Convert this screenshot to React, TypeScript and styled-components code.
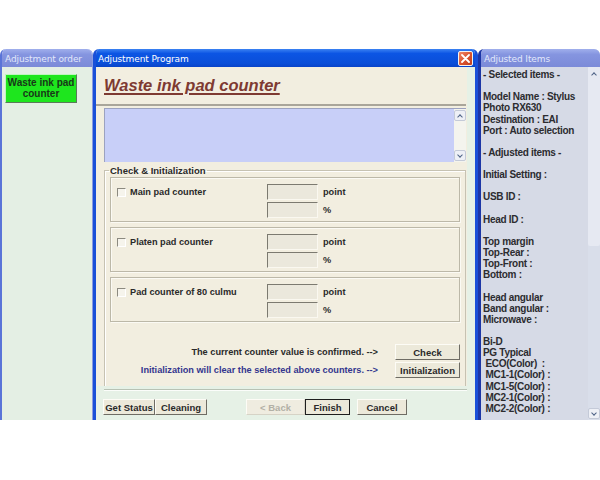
import styled, { createGlobalStyle } from "styled-components";

const GlobalStyle = createGlobalStyle`
  html, body {
    margin: 0;
    padding: 0;
    background: #fff;
  }
  * {
    box-sizing: border-box;
  }
`;

const adjustedLines = [
  "- Selected items -",
  "",
  "Model Name : Stylus",
  "Photo RX630",
  "Destination : EAI",
  "Port : Auto selection",
  "",
  "- Adjusted items -",
  "",
  "Initial Setting :",
  "",
  "USB ID :",
  "",
  "Head ID :",
  "",
  "Top margin",
  "Top-Rear :",
  "Top-Front :",
  "Bottom :",
  "",
  "Head angular",
  "Band angular :",
  "Microwave :",
  "",
  "Bi-D",
  "PG Typical",
  " ECO(Color)  :",
  " MC1-1(Color) :",
  " MC1-5(Color) :",
  " MC2-1(Color) :",
  " MC2-2(Color) :",
];

const counters = ["Main pad counter", "Platen pad counter", "Pad counter of 80 culmu"];

export default function App() {
  return (
    <>
      <GlobalStyle />
      <Desktop>
        <Windows>
          <OrderWindow>
            <TitleBar>Adjustment order</TitleBar>
            <OrderBody>
              <GreenButton>
                Waste ink pad
                <br />
                counter
              </GreenButton>
            </OrderBody>
          </OrderWindow>

          <MainWindow>
            <TitleBar $active>
              Adjustment Program
              <CloseButton>
                <svg width="9" height="9" viewBox="0 0 9 9">
                  <path d="M1 1 L8 8 M8 1 L1 8" stroke="#fff" strokeWidth="1.8" strokeLinecap="round" />
                </svg>
              </CloseButton>
            </TitleBar>
            <MainBody>
              <Sheet>
                <Header>
                  <Heading>Waste ink pad counter</Heading>
                </Header>
                <MessageBox>
                  <ScrollBar $light>
                    <ArrowBox>
                      <Chevron $up />
                    </ArrowBox>
                    <ArrowBox>
                      <Chevron />
                    </ArrowBox>
                  </ScrollBar>
                </MessageBox>
                <GroupBox>
                  <Legend>Check &amp; Initialization</Legend>
                  {counters.map((label) => (
                    <CounterBox key={label}>
                      <CheckLabel>
                        <CheckBox />
                        {label}
                      </CheckLabel>
                      <Fields>
                        <FieldRow>
                          <ValueField />
                          <Unit>point</Unit>
                        </FieldRow>
                        <FieldRow>
                          <ValueField />
                          <Unit>%</Unit>
                        </FieldRow>
                      </Fields>
                    </CounterBox>
                  ))}
                  <ActionRows>
                    <ActionRow>
                      <ActionText>The current counter value is confirmed. --&gt;</ActionText>
                      <WinButton $w={65}>Check</WinButton>
                    </ActionRow>
                    <ActionRow>
                      <ActionText $blue>Initialization will clear the selected above counters. --&gt;</ActionText>
                      <WinButton $w={65}>Initialization</WinButton>
                    </ActionRow>
                  </ActionRows>
                </GroupBox>
              </Sheet>
              <Separator />
              <ButtonBar>
                <WinButton $w={52}>Get Status</WinButton>
                <WinButton $w={52}>Cleaning</WinButton>
                <Spacer />
                <WinButton $w={59} disabled>
                  &lt; Back
                </WinButton>
                <WinButton $w={45} $default>
                  Finish
                </WinButton>
                <Gap />
                <WinButton $w={50}>Cancel</WinButton>
              </ButtonBar>
            </MainBody>
          </MainWindow>

          <ItemsWindow>
            <TitleBar>Adjusted Items</TitleBar>
            <ItemsBody>
              <ItemsList>
                {adjustedLines.map((line, i) => (
                  <ItemLine key={i}>{line || "\u00a0"}</ItemLine>
                ))}
              </ItemsList>
              <ScrollBar>
                <ArrowBox>
                  <Chevron $up />
                </ArrowBox>
                <Thumb />
                <ArrowBox>
                  <Chevron />
                </ArrowBox>
              </ScrollBar>
            </ItemsBody>
          </ItemsWindow>
        </Windows>
      </Desktop>
    </>
  );
}

const Desktop = styled.div`
  width: 600px;
  height: 480px;
  background: #fff;
  padding-top: 49px;
  overflow: hidden;
`;

const Windows = styled.div`
  display: flex;
  height: 371px;
`;

const WindowFrame = styled.section`
  display: flex;
  flex-direction: column;
  border-radius: 6px 6px 0 0;
  overflow: hidden;
`;

const OrderWindow = styled(WindowFrame)`
  width: 93px;
  border-left: 2px solid #5a74d8;
  border-right: 1px solid #8a9be0;
`;

const MainWindow = styled(WindowFrame)`
  width: 385px;
  border-left: 3px solid #1a50d8;
  border-right: 3px solid #1a50d8;
  background: #e6f1e6;
`;

const ItemsWindow = styled(WindowFrame)`
  width: 122px;
  border-left: 3px solid #1c36a6;
  background: #d6dae6;
`;

const TitleBar = styled.div<{ $active?: boolean }>`
  position: relative;
  height: 18px;
  flex: none;
  display: flex;
  align-items: center;
  padding: 2px 0 0 ${(p) => (p.$active ? "2px" : "3px")};
  font-family: "DejaVu Sans", Verdana, sans-serif;
  font-size: 9px;
  letter-spacing: -0.1px;
  color: ${(p) => (p.$active ? "#ffffff" : "#e2e8fb")};
  background: ${(p) =>
    p.$active
      ? "linear-gradient(#3b82f2 0%, #0c55e4 25%, #0a4ed8 80%, #0843c8 100%)"
      : "linear-gradient(#a0afec 0%, #8595e0 30%, #7b8ad8 100%)"};
`;

const CloseButton = styled.div`
  position: absolute;
  right: 2px;
  top: 2px;
  width: 15px;
  height: 15px;
  border-radius: 2px;
  border: 1px solid #f2f2f2;
  background: linear-gradient(135deg, #f08868, #d8502c 55%, #c04020);
  display: flex;
  align-items: center;
  justify-content: center;
`;

const OrderBody = styled.div`
  flex: 1;
  background: #e4efe4;
  padding: 7px 0 0 3px;
`;

const GreenButton = styled.div`
  width: 72px;
  height: 29px;
  background: #1ee61e;
  border: 1px solid;
  border-color: #bff5bf #5a7a5a #5a7a5a #bff5bf;
  font-family: "Liberation Sans", Arial, sans-serif;
  font-weight: bold;
  font-size: 10px;
  line-height: 11px;
  color: #183818;
  text-align: center;
  padding-top: 2px;
`;

const MainBody = styled.div`
  flex: 1;
  display: flex;
  flex-direction: column;
`;

const Sheet = styled.div`
  background: #f2eee0;
  margin-right: 8px;
  padding: 0 1px 0 0;
  height: 319px;
`;

const Header = styled.div`
  height: 39px;
  padding: 9px 0 0 8px;
  border-bottom: 2px solid #a9a59a;
`;

const Heading = styled.h1`
  margin: 0;
  font-family: "Liberation Sans", Arial, sans-serif;
  font-style: italic;
  font-weight: bold;
  font-size: 16.5px;
  line-height: 19px;
  color: #7e3a32;
  text-decoration: underline;
  text-decoration-thickness: 2px;
  text-underline-offset: 2px;
`;

const MessageBox = styled.div`
  margin: 2px 0 0 8px;
  height: 54px;
  background: #c8cff8;
  border-top: 1px solid #9ca2c0;
  border-left: 1px solid #9ca2c0;
  display: flex;
  justify-content: flex-end;
`;

const ScrollBar = styled.div<{ $light?: boolean }>`
  width: 12px;
  flex: none;
  display: flex;
  flex-direction: column;
  justify-content: space-between;
  background: ${(p) => (p.$light ? "#f4f4ee" : "#d9deea")};
  padding: 1px 0;
`;

const ArrowBox = styled.div`
  height: 11px;
  display: flex;
  align-items: center;
  justify-content: center;
  background: #eef0f6;
  border: 1px solid #c4cad8;
  border-radius: 2px;
`;

const Chevron = styled.span<{ $up?: boolean }>`
  width: 4px;
  height: 4px;
  border-left: 1.5px solid #4d6185;
  border-top: 1.5px solid #4d6185;
  transform: ${(p) => (p.$up ? "translateY(1px) rotate(45deg)" : "translateY(-1px) rotate(225deg)")};
`;

const Thumb = styled.div`
  margin-top: -175px;
  height: 180px;
  background: #e6e9f2;
  border-radius: 2px;
`;

const GroupBox = styled.fieldset`
  margin: 3px 0 0 8px;
  padding: 1px 5px 0 5px;
  height: 221px;
  border: 1px solid #c6c2b2;
  border-bottom: none;
  box-shadow: inset 1px 1px 0 #fff;
  font-family: "Liberation Sans", Arial, sans-serif;
  font-weight: bold;
  font-size: 9.2px;
  color: #2a2a2a;
`;

const Legend = styled.legend`
  padding: 0 1px;
  margin-left: -1px;
  font-size: 9.5px;
  line-height: 11px;
`;

const CounterBox = styled.div`
  height: 45px;
  margin-bottom: 5px;
  border: 1px solid #bcb8a8;
  box-shadow: inset 1px 1px 0 #fbfaf4, 1px 1px 0 #fbfaf4;
  display: flex;
  padding: 6px 0 0 6px;
`;

const CheckLabel = styled.label`
  width: 150px;
  display: flex;
  align-items: flex-start;
  gap: 4px;
  line-height: 11px;
  padding-top: 3px;
`;

const CheckBox = styled.span`
  width: 9px;
  height: 9px;
  margin-top: 1px;
  flex: none;
  background: #f6f4ec;
  border-top: 1px solid #8c8a80;
  border-left: 1px solid #8c8a80;
  border-right: 1px solid #fff;
  border-bottom: 1px solid #fff;
`;

const Fields = styled.div`
  display: flex;
  flex-direction: column;
  gap: 2px;
`;

const FieldRow = styled.div`
  display: flex;
  align-items: center;
  gap: 5px;
`;

const ValueField = styled.div`
  width: 51px;
  height: 16px;
  background: #ebe8dc;
  border-top: 1px solid #7c7a70;
  border-left: 1px solid #7c7a70;
  border-right: 1px solid #faf8f0;
  border-bottom: 1px solid #faf8f0;
`;

const Unit = styled.span`
  line-height: 11px;
`;

const ActionRows = styled.div`
  margin-top: 22px;
  display: flex;
  flex-direction: column;
  gap: 2px;
`;

const ActionRow = styled.div`
  display: flex;
  align-items: center;
  justify-content: flex-end;
  gap: 17px;
`;

const ActionText = styled.span<{ $blue?: boolean }>`
  color: ${(p) => (p.$blue ? "#34368e" : "#2a2a2a")};
`;

const WinButton = styled.button<{ $w: number; $default?: boolean }>`
  width: ${(p) => p.$w}px;
  height: 16px;
  padding: 0;
  margin: 0;
  font-family: "Liberation Sans", Arial, sans-serif;
  font-weight: bold;
  font-size: 9.5px;
  color: #2a2a2a;
  background: #ece9da;
  border: 1px solid;
  border-color: #fdfcf6 #6e6c64 #6e6c64 #fdfcf6;
  ${(p) => (p.$default ? "outline: 1px solid #1e1e1e; outline-offset: -1px; border-color: #1e1e1e;" : "")}
  &:disabled {
    color: #b2b0a6;
    background: #efece0;
    border-color: #fdfcf6 #d6d3c6 #d6d3c6 #fdfcf6;
  }
`;

const Separator = styled.div`
  margin: 3px 8px 0 8px;
  height: 2px;
  border-top: 1px solid #b8c2b4;
  border-bottom: 1px solid #fbfdfa;
`;

const ButtonBar = styled.div`
  display: flex;
  padding: 8px 0 0 7px;
`;

const Spacer = styled.div`
  width: 39px;
`;

const Gap = styled.div`
  width: 7px;
`;

const ItemsBody = styled.div`
  flex: 1;
  display: flex;
  min-height: 0;
`;

const ItemsList = styled.div`
  flex: 1;
  padding: 2px 0 0 2px;
  font-family: "Liberation Sans", Arial, sans-serif;
  font-weight: bold;
  font-size: 10px;
  letter-spacing: -0.3px;
  color: #2c2c30;
  overflow: hidden;
`;

const ItemLine = styled.div`
  height: 11.13px;
  line-height: 11px;
  white-space: pre;
`;
